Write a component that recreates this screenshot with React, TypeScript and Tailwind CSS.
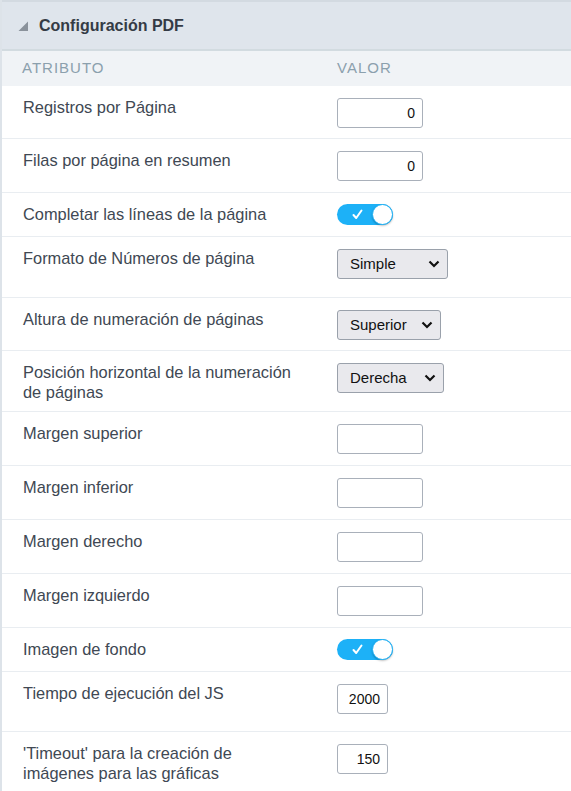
import React from 'react';

type Row =
  | { label: string; kind: 'input'; value: string; h: string; w?: string }
  | { label: string; kind: 'toggle'; h: string }
  | { label: string; kind: 'select'; value: string; w: string; h: string };

const rows: Row[] = [
  { label: 'Registros por Página', kind: 'input', value: '0', h: 'h-[53px]' },
  { label: 'Filas por página en resumen', kind: 'input', value: '0', h: 'h-[54px]' },
  { label: 'Completar las líneas de la página', kind: 'toggle', h: 'h-[44px]' },
  { label: 'Formato de Números de página', kind: 'select', value: 'Simple', w: 'w-[111px]', h: 'h-[61px]' },
  { label: 'Altura de numeración de páginas', kind: 'select', value: 'Superior', w: 'w-[104px]', h: 'h-[53px]' },
  { label: 'Posición horizontal de la numeración de páginas', kind: 'select', value: 'Derecha', w: 'w-[107px]', h: 'h-[61px]' },
  { label: 'Margen superior', kind: 'input', value: '', h: 'h-[54px]' },
  { label: 'Margen inferior', kind: 'input', value: '', h: 'h-[54px]' },
  { label: 'Margen derecho', kind: 'input', value: '', h: 'h-[54px]' },
  { label: 'Margen izquierdo', kind: 'input', value: '', h: 'h-[54px]' },
  { label: 'Imagen de fondo', kind: 'toggle', h: 'h-[44px]' },
  { label: 'Tiempo de ejecución del JS', kind: 'input', value: '2000', w: 'w-[51px]', h: 'h-[60px]' },
  { label: "'Timeout' para la creación de imágenes para las gráficas", kind: 'input', value: '150', w: 'w-[51px]', h: 'h-[60px]' },
];

function Toggle() {
  return (
    <div className="relative w-[56px] h-[21px] rounded-full bg-[#1db1f7]">
      <svg className="absolute left-[15px] top-[5px]" width="11" height="11" viewBox="0 0 11 11">
        <polyline points="1.5,6 4.2,9 9.5,1.5" fill="none" stroke="#fff" strokeWidth="2" strokeLinecap="round" strokeLinejoin="round" />
      </svg>
      <div className="absolute right-0 top-0 w-[21px] h-[21px] rounded-full bg-white border border-[#1db1f7] shadow-[0_1px_2px_rgba(0,0,0,0.25)]" />
    </div>
  );
}

function Select({ value, w }: { value: string; w: string }) {
  return (
    <div className={`${w} h-[30px] flex items-center justify-between pl-[12px] pr-[7px] rounded-[3px] border border-[#9aa1ab] bg-[#e9e9ed] text-[15px] text-[#111]`}>
      <span>{value}</span>
      <svg width="12" height="8" viewBox="0 0 12 8">
        <polyline points="1.5,1.5 6,6 10.5,1.5" fill="none" stroke="#111" strokeWidth="2.2" />
      </svg>
    </div>
  );
}

export default function App() {
  return (
    <div className="w-[571px] min-h-[791px] bg-white border-l-2 border-[#dde3e9] text-[#404853]" style={{ fontFamily: '"Liberation Sans", Arial, sans-serif' }}>
      {/* Header */}
      <div className="h-[51px] flex items-center gap-[11px] pl-[16px] bg-[#dfe5ec] border-t-2 border-b-2 border-t-[#d3dae1] border-b-[#d2dbe0]">
        <svg width="10" height="10" viewBox="0 0 10 10">
          <polygon points="10,0.5 10,10 0.5,10" fill="#8a929b" />
        </svg>
        <span className="text-[16px] font-bold text-[#343b45]">Configuración PDF</span>
      </div>

      {/* Column headers */}
      <div className="h-[35px] flex items-center bg-[#f0f3f6] text-[15px] tracking-[1px] text-[#8ba0ad]">
        <span className="w-[335px] pl-[20px]">ATRIBUTO</span>
        <span>VALOR</span>
      </div>

      {rows.map((r, i) => (
        <div
          key={i}
          className={`${r.h} flex items-start border-b border-[#e9edf1] ${r.kind === 'toggle' ? 'pt-[11px]' : 'pt-[12px]'}`}
        >
          <div className={`w-[335px] shrink-0 pl-[21px] pr-[42px] text-[16.4px] leading-[20px] ${r.kind === 'toggle' ? 'mt-0' : '-mt-px'}`}>{r.label}</div>
          {r.kind === 'input' && (
            <div className={`${r.w ?? 'w-[86px]'} h-[30px] flex items-center justify-end pr-[7px] rounded-[3px] border border-[#a9b0ba] bg-white text-[14px] text-[#111]`}>
              {r.value}
            </div>
          )}
          {r.kind === 'toggle' && <Toggle />}
          {r.kind === 'select' && <Select value={r.value} w={r.w} />}
        </div>
      ))}
    </div>
  );
}
